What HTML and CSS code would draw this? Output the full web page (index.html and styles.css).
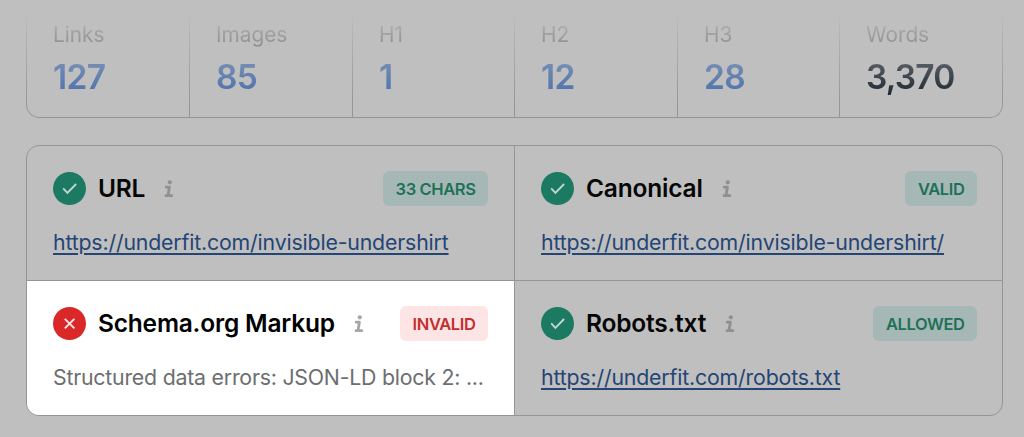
FILE: index.html
```html
<!DOCTYPE html>
<html lang="en">
<head>
<meta charset="utf-8">
<title>Page audit</title>
<link rel="stylesheet" href="styles.css">
</head>
<body>
<svg class="sprite" width="0" height="0" aria-hidden="true">
  <symbol id="check" viewBox="0 0 33 33"><path d="M10.2 16.4l4.2 4.4 8.7-8.8"/></symbol>
  <symbol id="cross" viewBox="0 0 33 33"><path d="M11.8 11.8l9.6 9.6M21.4 11.8L11.8 21.4"/></symbol>
  <symbol id="info" viewBox="0 0 10 18"><circle class="info-dot" cx="5.8" cy="2.3" r="2.1"/><path class="info-stem" d="M2.2 7.2h3.2L4.4 13Q4 15.7 6 15.7H7.8M2 15.7H5"/></symbol>
</svg>
<main class="page">
  <section class="stats">
    <div class="stat"><span class="label">Links</span><span class="value">127</span></div>
    <div class="stat"><span class="label">Images</span><span class="value">85</span></div>
    <div class="stat"><span class="label">H1</span><span class="value">1</span></div>
    <div class="stat"><span class="label">H2</span><span class="value">12</span></div>
    <div class="stat"><span class="label">H3</span><span class="value">28</span></div>
    <div class="stat"><span class="label">Words</span><span class="value value-dark">3,370</span></div>
  </section>
  <section class="checks">
    <article class="check">
      <header class="head">
        <svg class="status"><use href="#check"/></svg>
        <h2 class="title">URL</h2>
        <svg class="info"><use href="#info"/></svg>
        <span class="badge">33 CHARS</span>
      </header>
      <a class="link">https://underfit.com/invisible-undershirt</a>
    </article>
    <article class="check">
      <header class="head">
        <svg class="status"><use href="#check"/></svg>
        <h2 class="title">Canonical</h2>
        <svg class="info"><use href="#info"/></svg>
        <span class="badge">VALID</span>
      </header>
      <a class="link">https://underfit.com/invisible-undershirt/</a>
    </article>
    <article class="check active">
      <header class="head">
        <svg class="status status-bad"><use href="#cross"/></svg>
        <h2 class="title">Schema.org Markup</h2>
        <svg class="info"><use href="#info"/></svg>
        <span class="badge badge-bad">INVALID</span>
      </header>
      <p class="note">Structured data errors: JSON-LD block 2: ...</p>
    </article>
    <article class="check">
      <header class="head">
        <svg class="status"><use href="#check"/></svg>
        <h2 class="title">Robots.txt</h2>
        <svg class="info"><use href="#info"/></svg>
        <span class="badge">ALLOWED</span>
      </header>
      <a class="link">https://underfit.com/robots.txt</a>
    </article>
  </section>
</main>
</body>
</html>
```
FILE: styles.css
```css
* { box-sizing: border-box; }
body {
  margin: 0;
  background: #bfbfbf;
  font-family: Inter, "Liberation Sans", sans-serif;
}
.sprite { display: block; }
.page {
  height: 437px;
  padding: 0 21px 21px 26px;
  display: flex;
  flex-direction: column;
  gap: 27px;
  overflow: hidden;
}
.stats {
  height: 118px;
  display: grid;
  grid-template-columns: 163px 163px 162px 163px 162px 164px;
  border-bottom: 1px solid #959595;
  border-right: 1px solid #959595;
  border-radius: 0 0 13px 13px;
  -webkit-mask-image: linear-gradient(transparent 13px, rgba(0,0,0,.38) 42px, rgba(0,0,0,.85) 88px, #000 112px);
  mask-image: linear-gradient(transparent 13px, rgba(0,0,0,.38) 42px, rgba(0,0,0,.85) 88px, #000 112px);
}
.stat {
  display: flex;
  flex-direction: column;
  padding: 21px 0 0 26px;
  border-left: 1px solid #959595;
}
.stat:first-child { border-bottom-left-radius: 13px; }
.label {
  font-size: 20.8px;
  line-height: 27px;
  color: #4e4e4e;
}
.value {
  margin-top: 9px;
  font-size: 33.5px;
  line-height: 40px;
  font-weight: 600;
  letter-spacing: -0.6px;
  color: #426bab;
}
.value-dark { color: #101a26; letter-spacing: -0.8px; }
.checks {
  height: 271px;
  display: grid;
  grid-template-columns: 488px 488px;
  grid-template-rows: 135px 134px;
  border: 1px solid #959595;
  border-radius: 13px;
  overflow: hidden;
}
.check {
  padding: 25px 26px 0;
  min-width: 0;
  border-right: 1px solid #959595;
  border-bottom: 1px solid #959595;
}
.check:nth-child(even) { border-right: 0; }
.check:nth-child(n+3) { border-bottom: 0; }
.active { background: #fff; }
.head {
  display: flex;
  align-items: center;
  height: 35px;
}
.status {
  flex: none;
  width: 33px;
  height: 33px;
  border-radius: 50%;
  background: #1d7a62;
  fill: none;
  stroke: #c0d6cf;
  stroke-width: 1.9;
}
.status-bad { background: #da2828; stroke: #fbe9e9; }
.title {
  margin: 0 0 0 12px;
  font-size: 24.5px;
  font-weight: 600;
  line-height: 33px;
  letter-spacing: -0.2px;
  color: #060606;
  white-space: nowrap;
}
.active .title { color: #000; }
.info {
  flex: none;
  width: 10px;
  height: 18px;
  margin-left: 19px;
  color: #909090;
}
.active .info { color: #a6a6a6; }
.info-dot { fill: currentColor; }
.info-stem { fill: none; stroke: currentColor; stroke-width: 2.8; stroke-linecap: round; stroke-linejoin: round; }
.badge {
  margin-left: auto;
  height: 35px;
  padding: 0 12.5px;
  border-radius: 6px;
  background: #a5b8b5;
  color: #1f7058;
  font-size: 16.5px;
  font-weight: 600;
  line-height: 36.5px;
  letter-spacing: -0.4px;
}
.badge-bad { background: #fee5e5; color: #c22f2f; }
.link, .note {
  display: block;
  width: max-content;
  margin: 22px 0 0;
  font-size: 21.3px;
  line-height: 28px;
  letter-spacing: -0.17px;
  white-space: nowrap;
}
.link {
  color: #244575;
  text-decoration: underline;
  text-decoration-thickness: 1.5px;
  text-underline-offset: 3px;
}
.note { color: #6c6e70; letter-spacing: -0.22px; }
```
